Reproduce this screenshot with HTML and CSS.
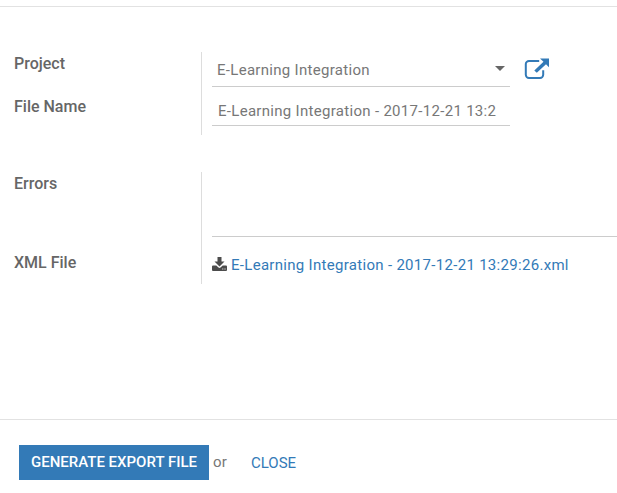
FILE: index.html
```html
<!DOCTYPE html>
<html lang="en">
<head>
<meta charset="utf-8">
<title>Export</title>
<link rel="stylesheet" href="styles.css">
</head>
<body>
<main class="content">
  <section class="group group-project">
    <div class="labels">
      <div class="label">Project</div>
      <div class="label label-name">File Name</div>
    </div>
    <div class="fields">
      <div class="row">
        <div class="input select"><span class="t1">E-Learning Integration</span><svg class="caret" width="10" height="5" viewBox="0 0 10 5"><path d="M0 0h10L5 5z"/></svg></div>
        <svg class="external" width="26" height="22" viewBox="0 0 26 22"><path class="frame" d="M15.2 2.9H5a3.2 3.2 0 0 0-3.2 3.2v10.700a3.200 3.200 0 0 0 3.200 3.200h11a3.200 3.200 0 0 0 3.200-3.200v-4.600"/><path class="arrow" d="M16 .5h9v8.700l-3-2.900-9.200 8.500-2.500-2.300 9.200-8.700z"/></svg>
      </div>
      <div class="input name"><span class="t2">E-Learning Integration - 2017-12-21 13:2</span></div>
    </div>
  </section>
  <section class="group group-result">
    <div class="labels">
      <div class="label">Errors</div>
      <div class="label label-xml">XML File</div>
    </div>
    <div class="fields">
      <div class="errors"></div>
      <div class="file">
        <svg class="download" width="15" height="14" viewBox="0 0 15 14"><path d="M5.500 0h4v4.500h3L7.500 9.500l-5-5h3z"/><path fill-rule="evenodd" d="M1 8.500h3.300l2.200 2q1 .8 2 0l2.200-2H14q1 0 1 1v3.500q0 1-1 1H1q-1 0-1-1V9.500q0-1 1-1zM10.300 11.500v1h1v-1zM12.500 11.500v1h1v-1z"/></svg>
        <a class="t3">E-Learning Integration - 2017-12-21 13:29:26.xml</a>
      </div>
    </div>
  </section>
</main>
<footer class="footer">
  <button class="generate">GENERATE EXPORT FILE</button>
  <span class="or">or</span>
  <a class="close">CLOSE</a>
</footer>
</body>
</html>
```
FILE: styles.css
```css
* { box-sizing: border-box; }
body {
  margin: 0;
  width: 617px;
  height: 493px;
  overflow: hidden;
  background: #fff;
  color: #777;
  font: 15px/20px Roboto, sans-serif;
  display: flex;
  flex-direction: column;
}
.content {
  height: 413px;
  margin-top: 6px;
  padding-top: 45px;
  border-top: 1px solid #e2e2e2;
}
.group { display: flex; }
.group-project { height: 83px; }
.group-result { height: 112px; margin-top: 37px; }
.labels {
  width: 202px;
  flex: none;
  padding: 2px 0 0 14px;
  border-right: 1px solid #ddd;
}
.label { font-size: 16px; font-weight: 500; color: #666; white-space: nowrap; }
.label-name { margin-top: 23px; }
.label-xml { margin-top: 59px; }
.fields { flex: 1; min-width: 0; padding-left: 10px; }
.row { display: flex; height: 35px; }
.input { width: 298px; border-bottom: 1px solid #ccc; white-space: nowrap; }
.select {
  display: flex;
  justify-content: space-between;
  padding: 8px 5px 0;
}
.caret { margin-top: 6px; fill: #666; }
.external { margin: 6px 0 0 14px; }
.frame { fill: none; stroke: #337ab7; stroke-width: 2; }
.arrow { fill: #337ab7; }
.name { height: 39px; padding: 14px 0 0 6px; }
.t1, .t2, .t3 { letter-spacing: .3px; }
.errors { height: 65px; border-bottom: 1px solid #ccc; }
.file { display: flex; padding-top: 18px; gap: 4px; white-space: nowrap; }
.download { margin-top: 2px; fill: #4c4c4c; }
.t3, .close { color: #337ab7; }
.footer {
  height: 74px;
  border-top: 1px solid #e2e2e2;
  padding: 25px 0 0 19px;
  display: flex;
}
.generate {
  width: 190px;
  height: 35px;
  border: 0;
  padding: 0;
  background: #337ab7;
  color: #fff;
  font: 500 15px/35px Roboto, sans-serif;
}
.or { margin: 7px 0 0 4px; width: 38px; letter-spacing: .3px; }
.close { margin-top: 8px; }
```
